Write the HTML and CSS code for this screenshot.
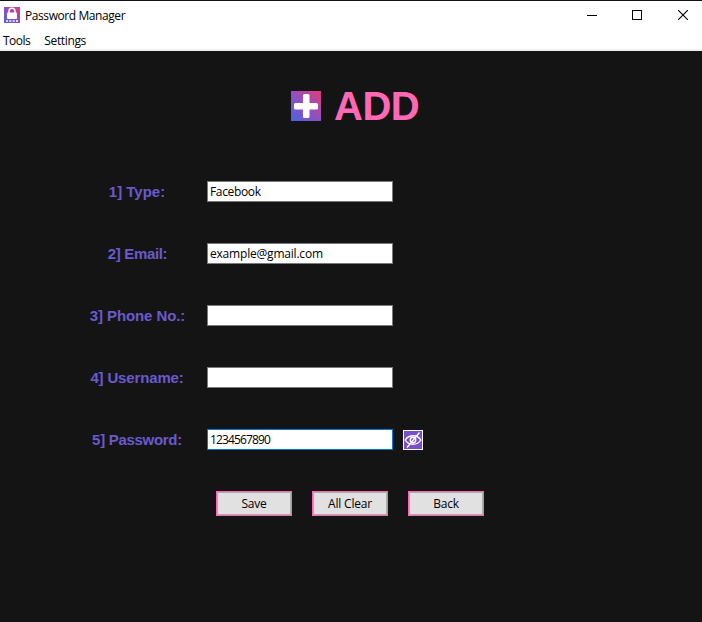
FILE: index.html
```html
<!DOCTYPE html>
<html lang="en">
<head>
<meta charset="utf-8">
<title>Password Manager</title>
<link rel="stylesheet" href="styles.css">
</head>
<body>
<header class="titlebar">
  <svg class="app-icon" width="16" height="16" viewBox="0 0 16 16">
    <defs><linearGradient id="brand" x1="0" y1="1" x2="1" y2="0"><stop offset="0" stop-color="#4a63e8"/><stop offset=".5" stop-color="#9150bd"/><stop offset="1" stop-color="#e53b78"/></linearGradient></defs>
    <rect width="16" height="16" fill="url(#brand)"/>
    <path d="M5 6V4.2a3 3 0 0 1 6 0V6" fill="none" stroke="#fff" stroke-width="1.5"/>
    <rect x="3" y="5.5" width="10" height="6.5" rx="1" fill="#fff"/>
    <path d="M2 14h2M5.3 14h2M8.7 14h2M12 14h2" stroke="#fff" stroke-width="1.3"/>
  </svg>
  <span class="app-name">Password Manager</span>
  <div class="controls">
    <svg width="10" height="10" viewBox="0 0 10 10"><path d="M0 5.5h10" stroke="#000"/></svg>
    <svg width="10" height="10" viewBox="0 0 10 10"><rect x=".5" y=".5" width="9" height="9" fill="none" stroke="#000"/></svg>
    <svg class="close" width="10" height="10" viewBox="0 0 10 10"><path d="M0 0l10 10M10 0L0 10" stroke="#000" stroke-width="1.1"/></svg>
  </div>
</header>
<nav class="menubar"><span class="menu-tools">Tools</span><span class="menu-settings">Settings</span></nav>
<main class="content">
  <h1 class="heading">
    <svg width="30" height="30" viewBox="0 0 30 30"><rect width="30" height="30" fill="url(#brand)"/><rect x="3" y="12" width="24" height="6.5" rx="1.6" fill="#fff"/><rect x="12" y="3" width="6.5" height="24" rx="1.6" fill="#fff"/></svg>
    <span>ADD</span>
  </h1>
  <form class="form">
    <label class="label" for="type">1] Type:</label><input class="field field-type" id="type" value="Facebook">
    <label class="label label-email" for="email">2] Email:</label><input class="field field-email" id="email" value="example@gmail.com">
    <label class="label label-phone" for="phone">3] Phone No.:</label><input class="field" id="phone">
    <label class="label label-user" for="user">4] Username:</label><input class="field" id="user">
    <label class="label label-pass" for="pass">5] Password:</label>
    <div class="password"><input class="field active" id="pass" value="1234567890">
      <button class="reveal" type="button" aria-label="Show password"><svg width="18" height="18" viewBox="0 0 18 18" fill="none" stroke="#fff" stroke-width="1.4"><path d="M1.2 9C4.7 3.3 13.3 3.3 16.8 9C13.3 14.7 4.7 14.7 1.2 9Z"/><circle cx="9" cy="9" r="2.7"/><path d="M3 16.5L15.5 1.5"/></svg></button>
    </div>
  </form>
  <div class="actions"><button class="btn">Save</button><button class="btn">All Clear</button><button class="btn">Back</button></div>
</main>
</body>
</html>
```
FILE: styles.css
```css
* { box-sizing: border-box; }
body {
  margin: 0;
  height: 622px;
  overflow: hidden;
  background: #141414;
  color: #000;
  font: 12px/16px "Open Sans", "Noto Sans", sans-serif;
}
.titlebar {
  display: flex;
  align-items: center;
  height: 31px;
  padding: 0 14px 0 4px;
  border-top: 1px solid #111118;
  background: #fff;
}
.app-icon { margin-right: 5px; margin-top: -2px; }
.app-name { letter-spacing: -.42px; }
.controls { display: flex; gap: 35px; margin: -2px 0 0 auto; }
.controls svg { display: block; }
.controls .close { margin-left: 1px; }
.menubar {
  display: flex;
  gap: 14px;
  height: 20px;
  padding: 2px 3px 0;
  border-bottom: 2px solid #f0f0f0;
  background: #fff;
}
.menu-tools { letter-spacing: -.5px; }
.menu-settings { letter-spacing: -.35px; }
.heading {
  display: flex;
  align-items: center;
  gap: 13px;
  height: 48px;
  margin: 0;
  padding-left: 291px;
  color: #ff69b4;
  font: bold 40px/48px "Liberation Sans", sans-serif;
  letter-spacing: -.5px;
}
.content { padding-top: 31px; }
.form {
  display: grid;
  grid-template-columns: 140px 1fr;
  grid-auto-rows: 21px;
  row-gap: 41px;
  margin: 51px 0 0 67px;
}
.label {
  color: #6a5acd;
  font: bold 15px/21px "Liberation Sans", sans-serif;
  text-align: center;
}
.label-email { letter-spacing: -.35px; padding-left: 1px; }
.label-phone { letter-spacing: -.1px; padding-left: 1px; }
.label-user { letter-spacing: -.15px; }
.label-pass { letter-spacing: -.3px; }
.field {
  width: 186px;
  height: 21px;
  padding: 0 2px;
  border: 1px solid #7a7a7a;
  border-radius: 0;
  outline: 0;
  background: #fff;
  color: #000;
  font: inherit;
}
.field-type { letter-spacing: -.35px; }
.field-email { letter-spacing: -.2px; }
.active { border-color: #0078d7; letter-spacing: -.85px; }
.password { display: flex; gap: 10px; }
.reveal {
  width: 20px;
  height: 20px;
  margin-top: 1px;
  padding: 0;
  border: 1px solid #fff;
  background: #7950cb;
}
.reveal svg { display: block; }
.actions { display: flex; gap: 20px; margin: 41px 0 0 216px; }
.btn {
  width: 76px;
  height: 25px;
  padding: 0;
  border: 1px solid #ff69b4;
  box-shadow: inset 0 0 0 1px #adadad;
  background: #e1e1e1;
  color: #000;
  font: inherit;
  letter-spacing: -.2px;
}
```
